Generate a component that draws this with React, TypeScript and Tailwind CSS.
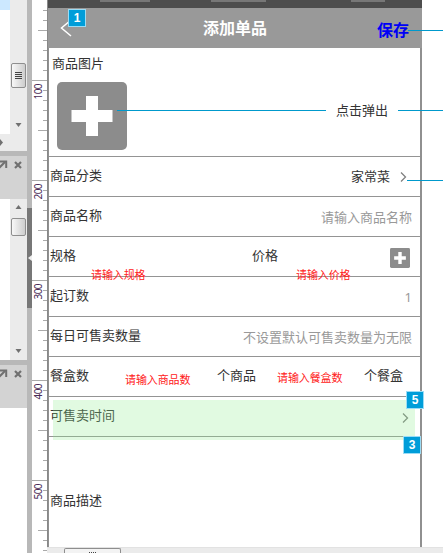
import type { ReactNode } from 'react';

const ticks = Array.from({ length: 56 }, (_, i) => i);

function Ruler() {
  return (
    <div className="w-[15px] h-full shrink-0 bg-white">
      {ticks.map((i) => {
        const major = i % 10 === 8;
        const mid = i % 10 === 3;
        return (
          <div key={i} className="relative h-[10px] flex justify-end">
            <div
              className={`h-px ${major ? 'w-[15px] bg-[#aaa]' : mid ? 'w-[9px] bg-[#aaa]' : i === 0 ? 'w-0' : 'w-1 bg-[#aaa]'}`}
            />
            {major && (
              <span className="absolute -left-px top-[4px] rotate-180 [writing-mode:vertical-rl] text-[10px] leading-[14px] tracking-[-0.6px] text-[#4a2a55]">
                {(i - 8) * 10 + 100}
              </span>
            )}
          </div>
        );
      })}
    </div>
  );
}

function Arrow({ d }: { d: string }) {
  return (
    <svg className="w-[7px] h-[5px]" viewBox="0 0 7 5">
      <path d={d} fill="#707070" />
    </svg>
  );
}
const UP = 'M3.5 0 6.5 4H.5z';
const DOWN = 'M.5 0H6.500L3.5 4z';

function PanelHead({ className }: { className: string }) {
  return (
    <div className={`flex bg-[#d3d3d3] border-t-[5px] border-[#b8b8b8] ${className}`}>
      <svg className="w-[27px] h-[20px]" viewBox="0 0 27 20" fill="none" stroke="#707070">
        <path d="M-2 13 5 6" strokeWidth="2" />
        <path d="M0 5.5H6.2V12" strokeWidth="2" />
        <path d="M15 6 21 12M21 6 15 12" strokeWidth="2.2" />
      </svg>
    </div>
  );
}

function Thumb({ className, grip }: { className: string; grip?: boolean }) {
  return (
    <div
      className={`w-[15px] rounded-[2px] border border-[#8e8e8e] bg-linear-to-r from-[#f8f8f8] to-[#cdcdcd] flex flex-col items-center justify-center gap-px ${className}`}
    >
      {grip && [0, 1, 2, 3].map((n) => <i key={n} className="w-[7px] h-px bg-[#444]" />)}
    </div>
  );
}

function SidePanels() {
  return (
    <div className="w-[27px] h-full shrink-0 flex flex-col overflow-hidden bg-white">
      <div className="h-[134px] flex">
        <div className="w-[10px] h-[10px] bg-[#cce8ff]" />
        <div className="w-[17px] bg-[#ebebeb] flex flex-col items-center">
          <Thumb className="mt-[63px] h-[25px]" grip />
          <div className="mt-auto pb-[6px] flex">
            <Arrow d={DOWN} />
          </div>
        </div>
      </div>
      <div className="h-[17px] flex items-center bg-[#ebebeb]">
        <svg className="w-[3px] h-[7px]" viewBox="0 0 3 7">
          <path d="M0 0 3 3.500 0 7z" fill="#707070" />
        </svg>
      </div>
      <PanelHead className="h-[48px]" />
      <div className="h-[161px] flex justify-end">
        <div className="w-[17px] bg-[#ebebeb] flex flex-col items-center pt-[6px]">
          <Arrow d={UP} />
          <Thumb className="mt-[8px] h-[18px]" />
          <div className="mt-auto pb-[6px] flex">
            <Arrow d={DOWN} />
          </div>
        </div>
      </div>
      <PanelHead className="h-[48px]" />
    </div>
  );
}

function Splitter() {
  return (
    <div className="w-[5px] h-full shrink-0 bg-[#b8b8b8] pt-[208px]">
      <div className="h-[100px] bg-[#777] flex items-center justify-end">
        <svg className="w-[4px] h-[6px]" viewBox="0 0 4 6">
          <path d="M4 0V6L0 3z" fill="#eee" />
        </svg>
      </div>
    </div>
  );
}

function Row({ children }: { children: ReactNode }) {
  return (
    <div className="relative h-[40px] shrink-0 border-b border-[#949494] flex items-center pl-px pr-[8px] pb-[2px]">
      {children}
    </div>
  );
}

function Chevron({ className = '' }: { className?: string }) {
  return (
    <svg className={`w-[7px] h-[12px] ${className}`} viewBox="0 0 7 12" fill="none" stroke="#808080" strokeWidth="1.3">
      <path d="M1 1.500 5.500 6 1 10.500" />
    </svg>
  );
}

function Plus({ className }: { className: string }) {
  return (
    <svg className={className} viewBox="0 0 70 68" preserveAspectRatio="none">
      <rect width="70" height="68" rx="5" fill="#8c8c8c" />
      <path d="M29 14H41V28H55.500V40H41V54H29V40H14.500V28H29z" fill="#fff" />
    </svg>
  );
}

function Badge({ n, className }: { n: number; className: string }) {
  return (
    <div
      className={`absolute w-[18px] h-[18px] border border-[#9bdcf5] bg-[#009dd9] text-white text-[12px] leading-[17px] font-bold text-center font-['Liberation_Sans',sans-serif] ${className}`}
    >
      {n}
    </div>
  );
}

function Hint({ children, className }: { children: ReactNode; className: string }) {
  return (
    <span className={`absolute text-[11px] leading-[14px] tracking-[-0.1px] text-[#ff2020] whitespace-nowrap ${className}`}>
      {children}
    </span>
  );
}

function Phone() {
  return (
    <div className="w-[375px] h-[547px] flex flex-col overflow-hidden bg-white border-l border-[#888]">
      <div className="h-[8px] shrink-0 bg-[#4d4d4d] flex">
        <div className="ml-[52px] w-[50px] h-[2px] bg-[#777]" />
        <div className="ml-[61px] w-[55px] h-[2px] bg-[#777]" />
        <div className="ml-[85px] w-[34px] h-[2px] bg-[#777]" />
      </div>
      <div className="h-[40px] shrink-0 bg-[#999] flex items-center pl-[12px] pr-[13px]">
        <svg className="w-[12px] h-[18px]" viewBox="0 0 12 18" fill="none" stroke="#fff" strokeWidth="1.5">
          <path d="M11 1 1.500 9 11 17" />
        </svg>
        <span className="ml-[131px] text-[16px] leading-5 font-bold text-white">添加单品</span>
        <span className="ml-auto mt-[3px] text-[16px] leading-5 font-bold text-[#0000f5]">保存</span>
      </div>
      <div className="flex-1 flex flex-col border-l border-r-2 border-[#909090]">
        <div className="h-[109px] shrink-0 border-b border-[#949494] pl-[3px] pt-[6px]">
          <div className="leading-[18px]">商品图片</div>
          <Plus className="ml-[5px] mt-[10px] w-[70px] h-[68px]" />
        </div>
        <Row>
          <span>商品分类</span>
          <span className="ml-auto mr-[10px] pt-[2px]">家常菜</span>
          <Chevron className="mr-[5px] mt-[2px]" />
        </Row>
        <Row>
          <span>商品名称</span>
          <span className="ml-auto text-[#999] pt-[5px]">请输入商品名称</span>
        </Row>
        <Row>
          <span>规格</span>
          <span className="ml-[176px]">价格</span>
          <Plus className="ml-auto mr-[2px] mt-[5px] w-[20px] h-[20px]" />
          <Hint className="left-[42px] top-[31px] z-10">请输入规格</Hint>
          <Hint className="left-[247px] top-[31px] z-10">请输入价格</Hint>
        </Row>
        <Row>
          <span>起订数</span>
          <span className="ml-auto text-[#999] pt-[5px]">1</span>
        </Row>
        <Row>
          <span>每日可售卖数量</span>
          <span className="ml-auto text-[#999] pt-[5px]">不设置默认可售卖数量为无限</span>
        </Row>
        <Row>
          <span>餐盒数</span>
          <Hint className="left-[76px] top-[16px]">请输入商品数</Hint>
          <span className="ml-[128px]">个商品</span>
          <Hint className="left-[228px] top-[14px]">请输入餐盒数</Hint>
          <span className="ml-auto mr-[9px]">个餐盒</span>
        </Row>
        <Row>
          <span>可售卖时间</span>
          <Chevron className="ml-auto mr-[3px] mt-[5px]" />
          <div className="absolute left-[4px] right-[5px] top-[3px] h-[40px] bg-[#90ee90]/27" />
        </Row>
        <div className="pl-px pt-[54px] leading-[18px]">商品描述</div>
      </div>
    </div>
  );
}

export default function App() {
  return (
    <div className="relative w-[443px] h-[553px] flex overflow-hidden bg-white text-[13px] text-[#333] font-['Noto_Sans','Noto_Sans_CJK_SC',sans-serif]">
      <SidePanels />
      <Splitter />
      <Ruler />
      <div className="flex-1 flex flex-col">
        <Phone />
        <div className="h-[6px] bg-[#ebebeb] border-t border-[#e2e2e2] flex items-start">
          <div className="ml-[17px] w-[57px] h-[5px] rounded-t-[2px] border border-b-0 border-[#8e8e8e] bg-[#f3f3f3] flex justify-center gap-px pt-[3px]">
            {[0, 1, 2, 3].map((n) => (
              <i key={n} className="w-px h-px bg-[#444]" />
            ))}
          </div>
        </div>
      </div>

      <div className="absolute left-[408px] top-[30px] w-[35px] h-px bg-[#0099cc]" />
      <div className="absolute left-[117px] top-[110px] w-[326px] flex items-center h-px">
        <div className="w-[209px] h-px bg-[#0099cc]" />
        <span className="w-[72px] text-center">点击弹出</span>
        <div className="flex-1 h-px bg-[#0099cc]" />
      </div>
      <div className="absolute left-[407px] top-[180px] w-[36px] h-px bg-[#0099cc]" />
      <Badge n={1} className="left-[68px] top-[9px]" />
      <Badge n={5} className="left-[406px] top-[391px]" />
      <Badge n={3} className="left-[403px] top-[436px]" />
    </div>
  );
}
